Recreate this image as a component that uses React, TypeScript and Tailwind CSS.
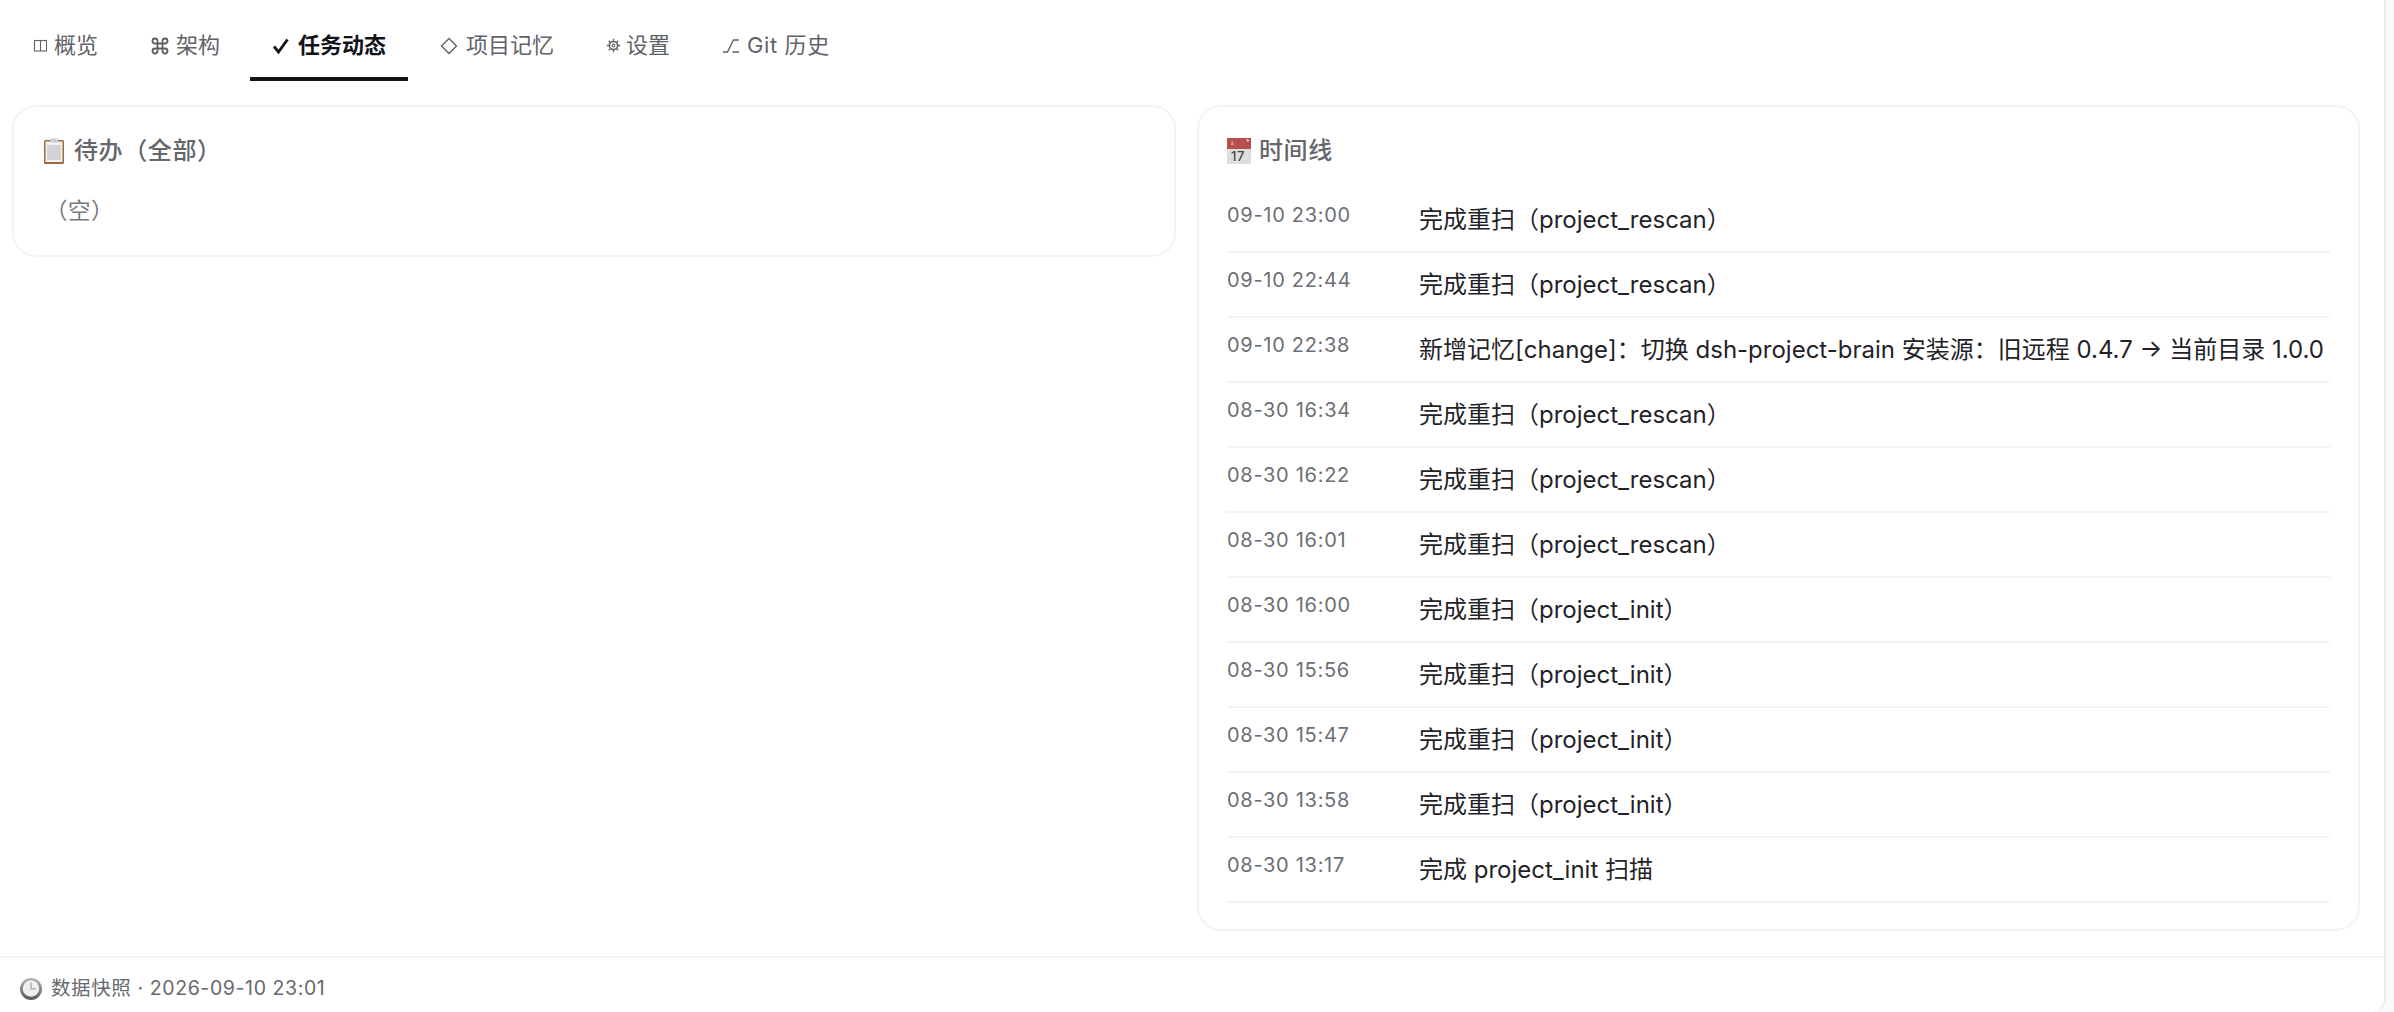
import React from "react";

const FONT = "font-['Inter','Noto_Sans_CJK_SC',sans-serif]";

function PanelIcon() {
  return (
    <svg width="15" height="15" viewBox="0 0 15 15" fill="none" stroke="currentColor" strokeWidth="1.1">
      <rect x="1.5" y="2.5" width="12" height="10.5" />
      <path d="M7.5 2.5v10.5" />
    </svg>
  );
}

function CommandIcon() {
  return (
    <svg width="20" height="20" viewBox="0 0 24 24" fill="none" stroke="currentColor" strokeWidth="2.2">
      <path d="M15 6v12a3 3 0 1 0 3-3H6a3 3 0 1 0 3 3V6a3 3 0 1 0-3 3h12a3 3 0 1 0-3-3" />
    </svg>
  );
}

function CheckIcon() {
  return (
    <svg width="18" height="16" viewBox="0 0 18 16" fill="none" stroke="currentColor" strokeWidth="2.8">
      <path d="M2 8.5l4.5 5.5L15.5 1.5" />
    </svg>
  );
}

function DiamondIcon() {
  return (
    <svg width="18" height="18" viewBox="0 0 18 18" fill="none" stroke="currentColor" strokeWidth="1.4">
      <path d="M9 1.5L16.5 9 9 16.5 1.5 9z" />
    </svg>
  );
}

function GearIcon() {
  return (
    <svg width="15" height="15" viewBox="0 0 14 14" fill="none" stroke="currentColor">
      <circle cx="7" cy="7" r="3.8" strokeWidth="1.5" />
      <circle cx="7" cy="7" r="1.3" strokeWidth="1" />
      <path d="M7 .8v2M7 11.2v2M.8 7h2M11.2 7h2M2.6 2.6L4 4M10 10l1.4 1.4M2.6 11.4L4 10M10 4l1.4-1.4" strokeWidth="1.2" />
    </svg>
  );
}

function BranchIcon() {
  return (
    <svg width="18" height="16" viewBox="0 0 18 16" fill="none" stroke="currentColor" strokeWidth="1.4">
      <path d="M1 14h4.5L11.5 2H17M10.5 14H17" />
    </svg>
  );
}

function ClipboardEmoji() {
  return (
    <svg width="24" height="26" viewBox="0 0 24 26">
      <rect x="2" y="2" width="20" height="24" rx="1.5" fill="#9a6b3c" />
      <rect x="3.5" y="3.5" width="17" height="20.5" fill="#f2f2f2" />
      <rect x="5" y="7" width="14" height="15" fill="#d4d4d4" />
      <rect x="8" y="0.5" width="8" height="4" rx="1" fill="#c9ced3" />
    </svg>
  );
}

function CalendarEmoji() {
  return (
    <svg width="24" height="26" viewBox="0 0 24 26">
      <rect x="0" y="0" width="24" height="11" fill="#b5504f" />
      <rect x="0" y="11" width="24" height="15" fill="#dededc" />
      <path d="M19 1l3 1-1 2z" fill="#f5f5f5" />
      <path d="M5 2l2 5H4z" fill="#d99a98" />
      <text x="11" y="23" textAnchor="middle" fontSize="13" fontFamily="Inter" fill="#444">17</text>
    </svg>
  );
}

function ClockEmoji() {
  return (
    <svg width="22" height="22" viewBox="0 0 22 22">
      <defs>
        <linearGradient id="rim" x1="0" y1="0" x2="0" y2="1">
          <stop offset="0" stopColor="#b0b3b7" />
          <stop offset="1" stopColor="#55595e" />
        </linearGradient>
      </defs>
      <circle cx="11" cy="11" r="11" fill="url(#rim)" />
      <circle cx="11" cy="10.5" r="8.2" fill="#efefef" />
      <path d="M11 4.5V10.8h4.8" fill="none" stroke="#a3a3a3" strokeWidth="1.2" />
    </svg>
  );
}

const tabs = [
  { label: "概览", icon: PanelIcon, cls: "gap-[6px]" },
  { label: "架构", icon: CommandIcon, cls: "gap-[6px]" },
  { label: "任务动态", icon: CheckIcon, cls: "gap-[8px]", active: true },
  { label: "项目记忆", icon: DiamondIcon, cls: "gap-[8px] ml-[2px]" },
  { label: "设置", icon: GearIcon, cls: "gap-[5px]" },
  { label: "Git 历史", icon: BranchIcon, cls: "gap-[7px] tracking-[0.6px]" },
];

const timeline = [
  ["09-10 23:00", "完成重扫（project_rescan）"],
  ["09-10 22:44", "完成重扫（project_rescan）"],
  ["09-10 22:38", "新增记忆[change]：切换 dsh-project-brain 安装源：旧远程 0.4.7 → 当前目录 1.0.0"],
  ["08-30 16:34", "完成重扫（project_rescan）"],
  ["08-30 16:22", "完成重扫（project_rescan）"],
  ["08-30 16:01", "完成重扫（project_rescan）"],
  ["08-30 16:00", "完成重扫（project_init）"],
  ["08-30 15:56", "完成重扫（project_init）"],
  ["08-30 15:47", "完成重扫（project_init）"],
  ["08-30 13:58", "完成重扫（project_init）"],
  ["08-30 13:17", "完成 project_init 扫描"],
];

export default function App() {
  return (
    <div className={`${FONT} flex h-[1012px] w-[2394px] overflow-hidden bg-[#fafafa]`}>
      <div className="flex w-[2386px] flex-col rounded-br-[14px] border-r-2 border-[#ececec] bg-white">
        {/* Tabs */}
        <nav className="flex h-[81px] shrink-0 items-stretch gap-[8px] pl-[11px]">
          {tabs.map((tab) => {
            const Icon = tab.icon;
            return (
              <div
                key={tab.label}
                className={`flex items-center ${tab.cls} border-b-[4px] px-[22px] pt-[14px] text-[22px] ${
                  tab.active ? "border-[#111318] font-semibold text-[#111318]" : "border-transparent text-[#5f6368]"
                }`}
              >
                <Icon />
                <span>{tab.label}</span>
              </div>
            );
          })}
        </nav>

        {/* Panels */}
        <main className="grid flex-1 grid-cols-[1164px_1163px] items-start gap-[21px] pt-[24px] pr-[25px] pl-[12px]">
          <section className="h-[152px] rounded-[24px] border-2 border-[#f4f4f5] pt-[27px] pr-[26px] pl-[28px]">
            <h3 className="flex h-[34px] items-center gap-[8px] text-[24px] font-medium tracking-[0.6px] text-[#63666b]">
              <ClipboardEmoji />
              待办（全部）
            </h3>
            <p className="mt-[28px] pl-[3px] text-[22.5px] leading-[30px] tracking-[0.5px] text-[#777a80]">（空）</p>
          </section>

          <section className="h-[826px] rounded-[24px] border-2 border-[#f4f4f5] px-[28px] pt-[27px]">
            <h3 className="flex h-[34px] items-center gap-[8px] text-[24px] font-medium tracking-[0.6px] text-[#63666b]">
              <CalendarEmoji />
              时间线
            </h3>
            <ul className="mt-[20px]">
              {timeline.map(([time, text], i) => (
                <li key={i} className="flex h-[65px] border-b-2 border-[#f4f4f5]">
                  <span className="w-[192px] shrink-0 pt-[13px] text-[20px] leading-[28px] tracking-[0.7px] text-[#6b6f76]">
                    {time}
                  </span>
                  <span className="whitespace-nowrap pt-[17px] text-[24px] leading-[30px] text-[#1f2328]">{text}</span>
                </li>
              ))}
            </ul>
          </section>
        </main>

        {/* Footer */}
        <footer className="flex h-[56px] shrink-0 items-center gap-[9px] border-t-2 border-[#f4f4f5] pt-[8px] pl-[20px] text-[19.5px] tracking-[0.6px] text-[#66696f]">
          <ClockEmoji />
          数据快照 · 2026-09-10 23:01
        </footer>
      </div>
    </div>
  );
}
